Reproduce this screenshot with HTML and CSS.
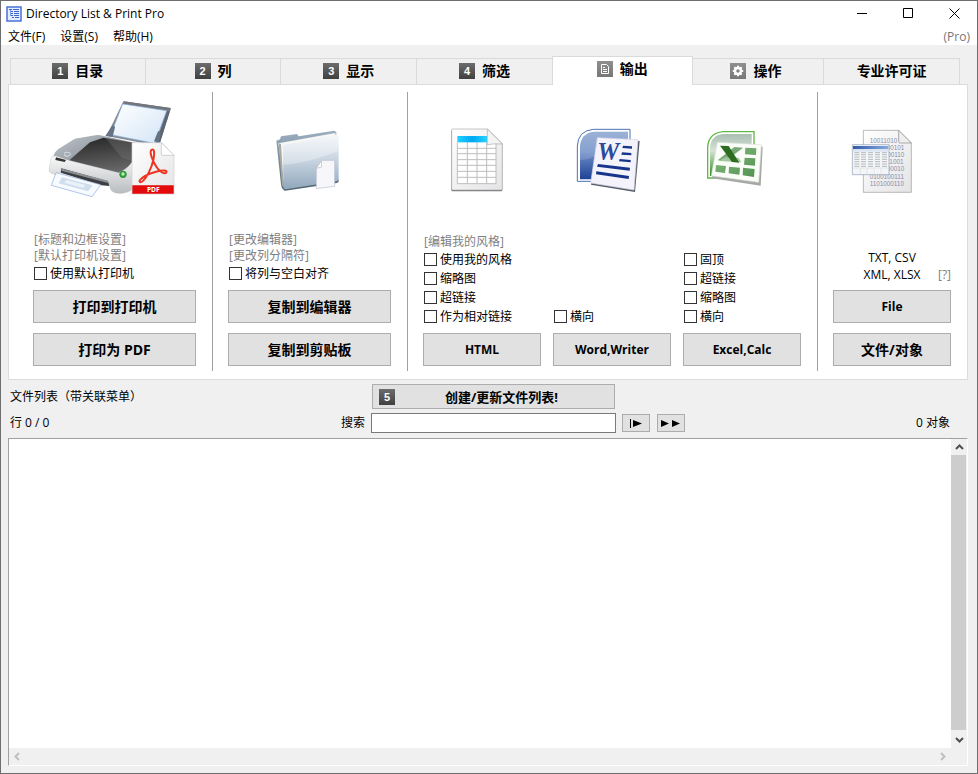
FILE: index.html
```html
<!DOCTYPE html>
<html lang="zh-CN">
<head>
  <meta charset="UTF-8">
  <meta name="viewport" content="width=device-width, initial-scale=1.0">
  <title>Directory List &amp; Print Pro</title>
  <link rel="stylesheet" href="styles.css">
</head>
<body>
  <div class="window">
    <header class="titlebar">
      <svg class="app-icon" width="16" height="16" viewBox="0 0 16 16">
        <rect x="1" y="1" width="14" height="14" fill="#e4edff" stroke="#4a70d8" stroke-width="1.500"/>
        <path d="M3 3.500h3M7 3.500h6M5 5.500h2M8 5.500h5M5 7.500h2M8 7.500h5M5 9.500h2M8 9.500h5M6 11.500h2M9 11.500h4" stroke="#3f66d0" fill="none"/>
        <path d="M4.500 4v6" stroke="#7d9be8"/>
      </svg>
      <h1>Directory List &amp; Print Pro</h1>
      <div class="window-buttons">
        <button type="button" aria-label="Minimize"><svg width="11" height="11" viewBox="0 0 11 11"><path d="M0 5.500h10"/></svg></button>
        <button type="button" aria-label="Maximize"><svg width="11" height="11" viewBox="0 0 11 11"><path d="M.5.5h9v9h-9z"/></svg></button>
        <button type="button" aria-label="Close"><svg width="11" height="11" viewBox="0 0 11 11"><path d="M.5.5l10 10M10.500.5l-10 10"/></svg></button>
      </div>
    </header>

    <nav class="menu">
      <button type="button">文件(F)</button>
      <button type="button">设置(S)</button>
      <button type="button">帮助(H)</button>
      <span class="edition">(Pro)</span>
    </nav>

    <main class="client">
      <div class="tabs" role="tablist">
        <button type="button" class="tab" role="tab"><span class="badge">1</span>目录</button>
        <button type="button" class="tab" role="tab"><span class="badge">2</span>列</button>
        <button type="button" class="tab" role="tab"><span class="badge">3</span>显示</button>
        <button type="button" class="tab" role="tab"><span class="badge">4</span>筛选</button>
        <button type="button" class="tab active" role="tab" aria-selected="true">
          <span class="badge light"><svg width="16" height="16" viewBox="0 0 16 16"><path d="M4.500 3.500h5l2 2v7h-7zM6 6.500h2M6 8.500h4M6 10.500h4" fill="none" stroke="#fff"/></svg></span>输出
        </button>
        <button type="button" class="tab" role="tab">
          <span class="badge light"><svg width="16" height="16" viewBox="0 0 16 16"><circle cx="8" cy="8" r="3" fill="none" stroke="#fff" stroke-width="2.400"/><path d="M8 2.800v2M8 11.200v2M2.800 8h2M11.200 8h2M4.300 4.300l1.500 1.500M10.200 10.200l1.500 1.500M11.700 4.300l-1.500 1.500M5.800 10.200l-1.500 1.500" stroke="#fff" stroke-width="2"/></svg></span>操作
        </button>
        <button type="button" class="tab" role="tab">专业许可证</button>
      </div>

      <div class="panel" role="tabpanel">
        <!-- print -->
        <section class="group">
          <div class="picture">
            <svg width="134" height="98" viewBox="24 30 402 294">
              <defs>
                <linearGradient id="paper" x1="0" y1="0" x2="1" y2="1"><stop offset="0" stop-color="#fff"/><stop offset="1" stop-color="#d3e5f7"/></linearGradient>
                <linearGradient id="shell" x1="0" y1="0" x2="1" y2="1"><stop offset="0" stop-color="#c3c8ce"/><stop offset=".5" stop-color="#8e969f"/><stop offset="1" stop-color="#d3d7dc"/></linearGradient>
                <linearGradient id="lid" x1=".4" y1="0" x2=".6" y2="1"><stop offset="0" stop-color="#2a2a2a"/><stop offset=".6" stop-color="#505050"/><stop offset="1" stop-color="#6a6a6a"/></linearGradient>
                <linearGradient id="front" x1="0" y1="0" x2="0" y2="1"><stop offset="0" stop-color="#fafafa"/><stop offset="1" stop-color="#b9bcc0"/></linearGradient>
                <linearGradient id="sheet" x1="0" y1="0" x2="1" y2="1"><stop offset="0" stop-color="#fff"/><stop offset="1" stop-color="#e4e4e6"/></linearGradient>
              </defs>
              <path d="M250 34l142 20-32 104-24 6-136-26z" fill="#858a90"/>
              <path d="M252 34l140 20-1 9-141-20z" fill="#72767b"/>
              <path d="M381 62l9 2-30 94-12 2z" fill="#5c6570"/>
              <path d="M248 42l132 20-36 98-132-26z" fill="url(#paper)" stroke="#87aee0" stroke-width="2"/>
              <path d="M196 138l20-31q8-2 9 5l-7 28zM342 154l12-30q8-2 8 5l-5 28z" fill="#667382"/>
              <path d="M40 198q4-12 14-20l48-30q8-4 20-5l44-7q10-2 22 1l100 22v70l-44 34-180-46-24 6z" fill="url(#shell)"/>
              <path d="M88 211l62-54 40-14 92 16v60l-46 30z" fill="url(#lid)"/>
              <path d="M196 143l84 15v56l-34-10z" fill="#777" opacity=".35"/>
              <path d="M34 202q4-5 14-4l42 14 146 36q20-4 42-34v84q-18 14-44 12-18-2-22-12l-4-12-148-41-8 12-20-8q-8-4-4-18z" fill="url(#front)" stroke="#b4b6b9"/>
              <path d="M48 202l30 8-4 6-28-6z" fill="#333"/>
              <path d="M64 235l140 39 4 14-24-2-122-38z" fill="#3b3d40"/>
              <path d="M66 236l138 36v7L64 242z" fill="#8d9196"/>
              <path d="M72 190q8-7 17-1t-8 10q-10 0-7-6" fill="none" stroke="#dce1e6" stroke-width="3"/>
              <path d="M48 248l134 36-26 36-122-34z" fill="#f7faff" stroke="#8aabdb" stroke-width="2"/>
              <path d="M66 262l92 24-14 18-88-24z" fill="#cfddec"/>
              <path d="M80 270l56 15-6 9-58-16z" fill="#e9f1f9"/>
              <circle cx="249" cy="253" r="11" fill="#2f9a3c"/><circle cx="249" cy="252" r="5" fill="#bff0b3"/>
              <path d="M276 158h88l38 38v116H276z" fill="url(#sheet)" stroke="#d0d0d2" stroke-width="2"/>
              <path d="M364 158l38 38h-34q-4 0-4-4z" fill="#fff" stroke="#bdbdbf" stroke-width="2"/>
              <path d="M277 286h124v25H277z" fill="#e20a0a"/>
              <path d="M334 180c8-6 11 6 6 30-5 24-20 52-30 62-8 8-14 4-10-2 8-10 30-20 48-25 22-6 34-4 31 2-4 8-20-1-30-17-10-15-22-44-15-50z" fill="none" stroke="#ee3524" stroke-width="6"/>
              <text class="pdf-label" x="340" y="305" text-anchor="middle">PDF</text>
            </svg>
          </div>
          <div class="options">
            <a href="#">[标题和边框设置]</a>
            <a href="#">[默认打印机设置]</a>
            <label><input type="checkbox">使用默认打印机</label>
          </div>
          <button type="button" class="btn">打印到打印机</button>
          <button type="button" class="btn">打印为 PDF</button>
        </section>

        <!-- editor / clipboard -->
        <section class="group">
          <div class="picture">
            <svg width="67" height="69" viewBox="168 117 201 207">
              <defs>
                <linearGradient id="folder" x1="0" y1="0" x2="0" y2="1"><stop offset="0" stop-color="#f0f4f8"/><stop offset=".5" stop-color="#c4d1de"/><stop offset="1" stop-color="#8ea6ba"/></linearGradient>
                <linearGradient id="back" x1="0" y1="0" x2="0" y2="1"><stop offset="0" stop-color="#9db0c2"/><stop offset="1" stop-color="#566b7d"/></linearGradient>
              </defs>
              <path d="M169 152l11-4 3-9 48-7 5 7 106-17 7 4v148l-158 25q-6-2-8-16z" fill="url(#back)"/>
              <path d="M175 160l171-31 2 20-154 148z" fill="#f7f7f5"/>
              <path d="M183 162l8 130-5-6-10-126z" fill="#aaa9a2"/>
              <path d="M194 164l156-29q6 0 6 6v128q0 6-6 7l-152 24q-8 1-8-8l-1-120q0-7 5-8z" fill="url(#folder)"/>
              <path d="M190 225q80-8 166-42v-42q0-6-6-6l-156 29q-5 1-5 8z" fill="#fff" opacity=".3"/>
              <path d="M190 291q0 8 8 7l152-24q6-1 6-7v6q0 5-6 6l-154 23q-8 0-6-11z" fill="#556674"/>
              <path d="M304 211h40v78l-55 7v-61z" fill="#f6f6fb" stroke="#b9c0ca" stroke-width="2"/>
              <path d="M304 213l1 18-16 4z" fill="#fff" stroke="#b4b8c0" stroke-width="2"/>
            </svg>
          </div>
          <div class="options">
            <a href="#">[更改编辑器]</a>
            <a href="#">[更改列分隔符]</a>
            <label><input type="checkbox">将列与空白对齐</label>
          </div>
          <button type="button" class="btn">复制到编辑器</button>
          <button type="button" class="btn">复制到剪贴板</button>
        </section>

        <!-- html / word / excel -->
        <section class="group formats">
          <div class="format">
            <div class="picture">
              <svg width="66" height="70" viewBox="117 54 198 210">
                <defs>
                  <linearGradient id="cyan" x1="0" y1="0" x2="1" y2="0"><stop offset="0" stop-color="#1fd0ff"/><stop offset=".5" stop-color="#00a8f4"/><stop offset="1" stop-color="#25d3ff"/></linearGradient>
                </defs>
                <path d="M128 60h105l44 42v138q0 4-4 4H128q-4 0-4-4V64q0-4 4-4z" fill="#777"/>
                <path d="M128 57h105l44 44v135q0 4-4 4H129q-4 0-4-4V60q0-3 3-3z" fill="url(#sheet)" stroke="#aaa" stroke-width="2"/>
                <path d="M142 97h116v124H142z" fill="#fff"/>
                <path d="M142 97v124h116V97M172 97v124M201 97v124M230 97v124M142 115h116M142 131h116M142 149h116M142 166h116M142 184h116M142 202h116" fill="none" stroke="#bdbdbd" stroke-width="3"/>
                <path d="M142 78h90v19h-90z" fill="url(#cyan)"/>
                <path d="M232 57l45 45q-24-2-45 2z" fill="#f4f4f4" stroke="#aaa" stroke-width="2"/>
              </svg>
            </div>
            <div class="options">
              <a href="#">[编辑我的风格]</a>
              <label><input type="checkbox">使用我的风格</label>
              <label><input type="checkbox">缩略图</label>
              <label><input type="checkbox">超链接</label>
              <label><input type="checkbox">作为相对链接</label>
            </div>
            <button type="button" class="btn">HTML</button>
          </div>
          <div class="format">
            <div class="picture">
              <svg width="72" height="70" viewBox="498 54 216 210">
                <defs>
                  <linearGradient id="word" x1="0" y1="0" x2="0" y2="1"><stop offset="0" stop-color="#8aa4cf"/><stop offset=".4" stop-color="#7291c8"/><stop offset="1" stop-color="#1d4297"/></linearGradient>
                </defs>
                <path d="M502 214V108q2-46 48-50h110v156z" fill="#fff" stroke="#4a72b5" stroke-width="3"/>
                <path d="M510 208v-98q2-40 42-45h102v143z" fill="url(#word)"/>
                <path d="M510 150q50 0 90-50l54-10V66H552q-40 4-42 44z" fill="#fff" opacity=".15"/>
                <path d="M567 88l122 5-14 153-132-22z" fill="#555b66"/>
                <path d="M562 83l122 6-12 151-130-21z" fill="#f4f3fb" stroke="#d4d4e4" stroke-width="2"/>
                <text class="word-letter" x="562" y="150">W</text>
                <path d="M639 107l27 2v7l-29-2zM636 127l28 2v7l-30-2zM629 147l33 3v7l-35-3zM564 162l96 11-1 9-98-12zM559 184l98 14-1 9-98-14z" fill="#16358a"/>
              </svg>
            </div>
            <div class="options">
              <label><input type="checkbox">横向</label>
            </div>
            <button type="button" class="btn">Word,Writer</button>
          </div>
          <div class="format">
            <div class="picture">
              <svg width="72" height="70" viewBox="78 54 216 210">
                <defs>
                  <linearGradient id="excel" x1="0" y1="0" x2="0" y2="1"><stop offset="0" stop-color="#a9c0b0"/><stop offset=".4" stop-color="#d5e2d6"/><stop offset="1" stop-color="#2f8a20"/></linearGradient>
                  <linearGradient id="cell" x1="0" y1="0" x2="1" y2="1"><stop offset="0" stop-color="#8dbb83"/><stop offset="1" stop-color="#4f9350"/></linearGradient>
                </defs>
                <path d="M83 204v-92q2-42 46-47h93v139z" fill="#fff" stroke="#5fb944" stroke-width="4"/>
                <path d="M90 198v-84q2-38 40-42h85v126z" fill="url(#excel)"/>
                <path d="M116 103l132 7-6 117-146-22z" fill="#a5a8a5"/>
                <path d="M112 97l132 7-8 113-142-20z" fill="#fbfdf8" stroke="#dde3da" stroke-width="2"/>
                <path d="M163 111l26 2-52 40-24-2z" fill="#79a878"/>
                <path d="M136 142l40 1 8 14-68-4z" fill="#a3c79e"/>
                <path d="M120 107l26 1 32 50-22-2z" fill="#2c6d1f"/>
                <path d="M196 113l33 2-1 20-33-2zM194 143l32 2-1 22-33-3zM108 165l30 3-3 21-29-4zM147 170l33 3-2 21-32-4zM189 173l35 4-2 24-34-5z" fill="url(#cell)"/>
              </svg>
            </div>
            <div class="options">
              <label><input type="checkbox">固顶</label>
              <label><input type="checkbox">超链接</label>
              <label><input type="checkbox">缩略图</label>
              <label><input type="checkbox">横向</label>
            </div>
            <button type="button" class="btn">Excel,Calc</button>
          </div>
        </section>

        <!-- file export -->
        <section class="group">
          <div class="picture">
            <svg width="80" height="70" viewBox="516 54 240 210">
              <defs>
                <linearGradient id="bar" x1="0" y1="0" x2="1" y2="0"><stop offset="0" stop-color="#325aa8"/><stop offset="1" stop-color="#86abe0"/></linearGradient>
              </defs>
              <path d="M550 61h106l38 38v148H550z" fill="url(#sheet)" stroke="#999" stroke-width="2"/>
              <g class="bits">
                <text x="569" y="98">10011010</text>
                <text x="569" y="119">0101100101</text>
                <text x="569" y="141">1001000110</text>
                <text x="569" y="162">0110111001</text>
                <text x="569" y="184">1011000010</text>
                <text x="569" y="206">0100100111</text>
                <text x="569" y="227">1101000110</text>
              </g>
              <path d="M656 61l38 38h-34q-4 0-4-4z" fill="#eee" stroke="#888" stroke-width="2"/>
              <path d="M517 104h110v90H517z" fill="#f3f5f8" stroke="#8c9db5" stroke-width="2"/>
              <path d="M519 108h106v10H519z" fill="url(#bar)"/>
              <path d="M519 118h106v7H519z" fill="#dce6f2"/>
              <path d="M523 128h15M543 128h15M564 128h15M585 128h15M606 128h15M523 134h15M543 134h15M564 134h15M585 134h15M606 134h15M523 141h15M543 141h15M564 141h15M585 141h15M606 141h15M523 148h15M543 148h15M564 148h15M585 148h15M606 148h15M523 155h15M543 155h15M564 155h15M585 155h15M606 155h15M523 162h15M543 162h15M564 162h15M585 162h15M606 162h15M523 169h15M543 169h15M564 169h15M585 169h15M606 169h15" stroke="#b4bbb9" stroke-width="3"/>
              <path d="M541 174v18M561 174v18M582 174v18M603 174v18M519 174h106" stroke="#dcdfe3" stroke-width="2"/>
            </svg>
          </div>
          <div class="file-types">
            <span>TXT, CSV</span>
            <span>XML, XLSX</span>
            <a href="#">[?]</a>
          </div>
          <button type="button" class="btn latin">File</button>
          <button type="button" class="btn">文件/对象</button>
        </section>
      </div>

      <div class="toolbar">
        <span>文件列表（带关联菜单）</span>
        <button type="button" class="create"><span class="badge">5</span><span>创建/更新文件列表!</span></button>
        <span></span>
        <div class="row-info"><span>行 0 / 0</span><label for="search">搜索</label></div>
        <input type="text" id="search">
        <div class="results">
          <button type="button" class="step" aria-label="Next"><svg width="16" height="9" viewBox="0 0 16 9"><path d="M2 0h1v9H2zM5 1l9 3.500L5 8z"/></svg></button>
          <button type="button" class="step" aria-label="All"><svg width="20" height="9" viewBox="0 0 20 9"><path d="M0 1l8 3.500L0 8zM11 1l8 3.500L11 8z"/></svg></button>
          <span class="count">0 对象</span>
        </div>
      </div>

      <div class="list">
        <div class="rows"></div>
        <div class="scroll-y">
          <button type="button" aria-label="Up"><svg width="9" height="6" viewBox="0 0 9 6"><path d="M1 5l3.500-3.500L8 5"/></svg></button>
          <div class="thumb"></div>
          <button type="button" aria-label="Down"><svg width="9" height="6" viewBox="0 0 9 6"><path d="M1 1l3.500 3.500L8 1"/></svg></button>
        </div>
        <div class="scroll-x">
          <button type="button" aria-label="Left" disabled><svg width="6" height="9" viewBox="0 0 6 9"><path d="M5 1L1.500 4.500 5 8"/></svg></button>
          <button type="button" aria-label="Right" disabled><svg width="6" height="9" viewBox="0 0 6 9"><path d="M1 1l3.500 3.500L1 8"/></svg></button>
        </div>
      </div>
    </main>
  </div>
</body>
</html>
```
FILE: styles.css
```css
* {
  box-sizing: border-box;
}
body {
  margin: 0;
  font-family: "Open Sans", "Noto Sans CJK SC", sans-serif;
  font-size: 12px;
  line-height: 16px;
  color: #000;
}
button, input {
  font: inherit;
  color: inherit;
}
button {
  padding: 0;
  border: none;
  background: none;
}
a {
  color: #808080;
  text-decoration: none;
}
svg {
  display: block;
  overflow: visible;
}
.window {
  display: flex;
  flex-direction: column;
  min-height: 100vh;
  border: 1px solid #6e6e6e;
  background: #f0f0f0;
}

/* title and menu */
.titlebar {
  display: flex;
  align-items: center;
  height: 25px;
  padding-left: 5px;
  background: #fff;
}
h1 {
  margin: 0 auto 0 4px;
  font-size: 12px;
  font-weight: 400;
}
.window-buttons {
  display: flex;
}
.window-buttons button {
  display: flex;
  justify-content: center;
  width: 46px;
}
.window-buttons path {
  fill: none;
  stroke: #000;
}
.menu {
  display: flex;
  align-items: center;
  gap: 15px;
  height: 19px;
  padding: 2px 7px 0;
  background: #fff;
}
.edition {
  margin-left: auto;
  color: #777;
}

/* tabs */
.client {
  display: flex;
  flex-direction: column;
  flex: 1;
  padding: 13px 9px 7px 7px;
}
.tabs {
  display: grid;
  grid-template-columns: repeat(7, 1fr);
  height: 26px;
  padding: 0 8px 0 2px;
}
.tab {
  display: flex;
  align-items: center;
  justify-content: center;
  gap: 7px;
  padding-bottom: 2px;
  border: 1px solid #dadada;
  border-width: 1px 1px 0 0;
  font-size: 14px;
  font-weight: 700;
}
.tab:first-child {
  border-left-width: 1px;
}
.tab.active {
  position: relative;
  margin: -2px -4px -1px -1px;
  padding-bottom: 4px;
  border-left-width: 1px;
  background: #fff;
}
.badge {
  display: flex;
  align-items: center;
  justify-content: center;
  width: 16px;
  height: 16px;
  background: linear-gradient(#6c6c6c, #404040);
  color: #fff;
  font-family: "Liberation Sans", sans-serif;
  font-size: 11px;
  font-weight: 700;
}
.badge.light {
  background: linear-gradient(#8f8f8f, #777);
}

/* output panel */
.panel {
  display: grid;
  grid-template-columns: 195fr 195fr 410fr 149fr;
  padding: 7px 0 8px 9px;
  border: 1px solid #dcdcdc;
  background: #fff;
}
.group {
  display: flex;
  flex-direction: column;
  gap: 10px;
  padding: 0 16px 5px 15px;
  border-right: 1px solid #a0a0a0;
}
.group:last-child {
  border-right: none;
}
.picture {
  display: flex;
  align-items: flex-end;
  justify-content: center;
  height: 106px;
  margin-bottom: 24px;
}
.options {
  display: flex;
  flex-direction: column;
  margin: auto 0 -3px;
}
.options label {
  display: flex;
  align-items: center;
  gap: 3px;
  height: 19px;
  padding-left: 1px;
}
.options a {
  padding-left: 1px;
}
input[type="checkbox"] {
  appearance: none;
  width: 13px;
  height: 13px;
  margin: 0;
  border: 1px solid #333;
  background: #fff;
}
input[type="checkbox"]:checked {
  background: #333;
}
.btn {
  height: 33px;
  border: 1px solid #adadad;
  background: #e1e1e1;
  font-weight: 700;
}
.group > .btn {
  font-size: 14px;
}
.group > .latin {
  font-size: 12px;
}
.btn:hover, .create:hover, .step:hover {
  border-color: #0078d7;
  background: #e5f1fb;
}
.formats {
  display: grid;
  grid-template-columns: repeat(3, 1fr);
  gap: 12px;
}
.format {
  display: flex;
  flex-direction: column;
  gap: 10px;
}
.file-types {
  display: grid;
  grid-template-columns: 1fr auto 1fr;
  margin: auto 0 -3px;
  line-height: 17px;
  text-align: center;
}
.file-types span {
  grid-column: 2;
}
.file-types a {
  grid-column: 3;
  grid-row: 2;
  text-align: right;
}
.pdf-label {
  font-size: 20px;
  font-weight: 700;
  fill: #fff;
}
.word-letter {
  font-family: "Liberation Serif", serif;
  font-size: 74px;
  font-style: italic;
  font-weight: 700;
  fill: #2a4a9c;
}
.bits {
  font-family: "Liberation Sans", sans-serif;
  font-size: 19px;
  fill: #8c8ca8;
}

/* search row */
.toolbar {
  display: grid;
  grid-template-columns: 363fr 245fr 352fr;
  align-items: center;
  row-gap: 4px;
  padding: 4px 0 5px;
}
.toolbar > span {
  padding-left: 2px;
}
.create {
  display: flex;
  align-items: center;
  height: 25px;
  margin: 0 1px;
  padding: 0 6px;
  border: 1px solid #adadad;
  background: #e1e1e1;
  font-size: 13px;
  font-weight: 700;
}
.create span:last-child {
  flex: 1;
}
.row-info {
  display: flex;
  justify-content: space-between;
  padding: 0 6px 0 2px;
}
#search {
  width: 100%;
  height: 20px;
  padding: 0 4px;
  border: 1px solid #7a7a7a;
  background: #fff;
}
.results {
  display: flex;
  align-items: center;
  gap: 7px;
  padding: 0 18px 0 6px;
}
.step {
  display: flex;
  align-items: center;
  justify-content: center;
  width: 28px;
  height: 18px;
  border: 1px solid #adadad;
  background: #e1e1e1;
}
.count {
  margin-left: auto;
}

/* file list */
.list {
  display: grid;
  grid-template: 1fr 17px / 1fr 16px;
  flex: 1;
  border: 1px solid #a0a0a0;
  border-right-color: #fff;
  border-bottom-color: #fff;
}
.rows {
  background: #fff;
}
.scroll-y {
  display: flex;
  flex-direction: column;
  padding-right: 1px;
}
.scroll-y button, .scroll-x button {
  display: flex;
  align-items: center;
  justify-content: center;
  width: 16px;
  height: 16px;
}
.scroll-y path {
  fill: none;
  stroke: #505050;
  stroke-width: 2;
}
.thumb {
  flex: 1;
  margin-bottom: 2px;
  background: #cdcdcd;
}
.scroll-x {
  display: flex;
  justify-content: space-between;
}
.scroll-x path {
  fill: none;
  stroke: #bfbfbf;
  stroke-width: 2;
}
```
